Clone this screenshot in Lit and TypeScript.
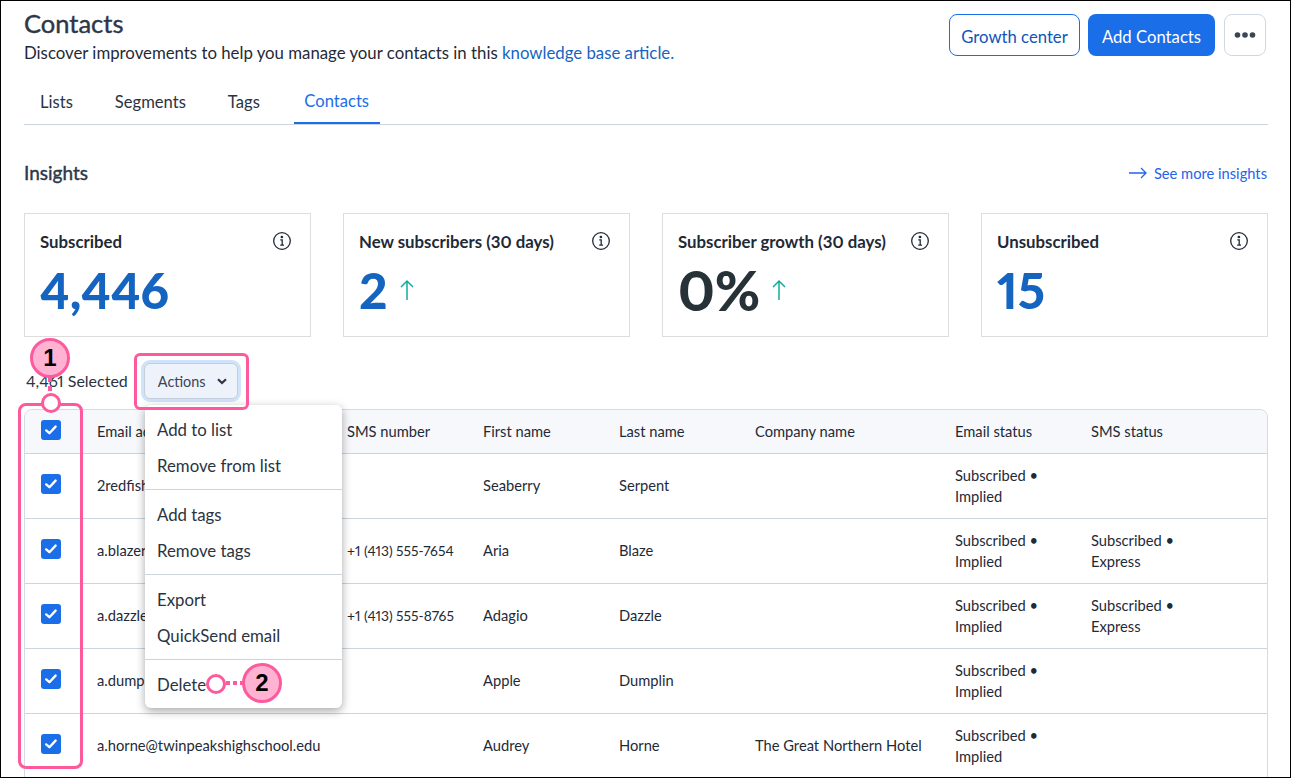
import { LitElement, html, css, svg } from 'lit';
import { customElement } from 'lit/decorators.js';

const cards = [
  { title: 'Subscribed', value: '4,446', dark: false, arrow: false },
  { title: 'New subscribers (30 days)', value: '2', dark: false, arrow: true },
  { title: 'Subscriber growth (30 days)', value: '0%', dark: true, arrow: true },
  { title: 'Unsubscribed', value: '15', dark: false, arrow: false },
];

const rows = [
  { email: '2redfish@example.com', sms: '', first: 'Seaberry', last: 'Serpent', company: '', smsStatus: false },
  { email: 'a.blazer@example.com', sms: '+1 (413) 555-7654', first: 'Aria', last: 'Blaze', company: '', smsStatus: true },
  { email: 'a.dazzle@example.com', sms: '+1 (413) 555-8765', first: 'Adagio', last: 'Dazzle', company: '', smsStatus: true },
  { email: 'a.dumplin@example.com', sms: '', first: 'Apple', last: 'Dumplin', company: '', smsStatus: false },
  { email: 'a.horne@twinpeakshighschool.edu', sms: '', first: 'Audrey', last: 'Horne', company: 'The Great Northern Hotel', smsStatus: false },
];

const menu = [['Add to list', 'Remove from list'], ['Add tags', 'Remove tags'], ['Export', 'QuickSend email'], ['Delete']];

const infoIcon = svg`<svg class="info" width="20" height="20" viewBox="0 0 20 20" fill="none" stroke="#1f2a37" stroke-width="1.3">
  <circle cx="10" cy="10" r="8.3"/><path d="M8.3 8.8H10.2V14M8.2 14.1H12"/><circle cx="9.9" cy="6" r=".7" fill="#1f2a37"/></svg>`;

const upArrow = svg`<svg class="up" width="16" height="22" viewBox="0 0 16 22" fill="none" stroke="#12ab9f" stroke-width="1.5">
  <path d="M8 21V2M2 8L8 2L14 8"/></svg>`;

const check = svg`<svg width="20" height="20" viewBox="0 0 20 20" fill="none" stroke="#fff" stroke-width="2.4" stroke-linecap="round" stroke-linejoin="round">
  <path d="M5.2 10.4L8.4 13.2L14.6 6.6"/></svg>`;

@customElement('app-root')
export class AppRoot extends LitElement {
  static styles = css`
    :host {
      display: block;
      position: relative;
      box-sizing: border-box;
      width: 1291px;
      height: 778px;
      overflow: hidden;
      border: 1px solid #000;
      background: #fff;
      padding: 0 22px 0 23px;
      font-family: Lato, "Open Sans", sans-serif;
      font-variant-numeric: proportional-nums;
      color: #2a3441;
    }

    .top {
      display: flex;
      justify-content: space-between;
      height: 86px;
    }

    h1 {
      margin: 7px 0 0;
      font-size: 25.5px;
      line-height: 30px;
      font-weight: 400;
      -webkit-text-stroke: 0.4px #2d3748;
      color: #2d3748;
    }

    .sub {
      margin: 4px 0 0;
      font-size: 16.8px;
      line-height: 22px;
      color: #1f2a37;
    }

    .sub a {
      color: #1565c0;
      text-decoration: none;
    }

    .buttons {
      display: flex;
      align-items: flex-start;
      gap: 8px;
      padding: 13px 2px 0 0;
    }

    .btn {
      box-sizing: border-box;
      display: flex;
      align-items: center;
      justify-content: center;
      height: 42px;
      border-radius: 8px;
      font-size: 16.7px;
    }

    .btn span { padding-top: 3px; }

    .outline { width: 131px; border: 1px solid #1a6ee8; color: #0f55b8; }
    .solid { width: 127px; background: #1a6ee8; color: #fff; }
    .dots { width: 42px; margin-left: 1px; border: 1px solid #cfd6e4; }

    .tabs {
      display: flex;
      gap: 10px;
      height: 38px;
      box-sizing: border-box;
      border-bottom: 1px solid #ccd5dd;
      font-size: 16.6px;
    }

    .tab {
      box-sizing: border-box;
      padding: 5px 16px 0;
      height: 37px;
      white-space: nowrap;
    }

    .tab.active {
      margin-left: 8px;
      padding: 4px 10.5px 0;
      color: #1a6ee8;
      border-bottom: 2px solid #1a6ee8;
    }

    .insights {
      display: flex;
      justify-content: space-between;
      align-items: center;
      margin-top: 37px;
      height: 22px;
    }

    h2 {
      margin: -2px 0 0;
      font-size: 19px;
      font-weight: 400;
      -webkit-text-stroke: 0.4px #2d3748;
      color: #2d3748;
    }

    .more {
      display: flex;
      align-items: center;
      gap: 7px;
      font-size: 14.7px;
      color: #2563eb;
      margin-right: 1px;
    }

    .cards {
      display: grid;
      grid-template-columns: repeat(4, 287px);
      gap: 32px;
      margin-top: 29px;
    }

    .card {
      box-sizing: border-box;
      height: 124px;
      border: 1px solid #ddd;
      padding: 17px 18px 0 15px;
    }

    .card-head {
      display: flex;
      justify-content: space-between;
      align-items: center;
      height: 20px;
      font-size: 16.8px;
      font-weight: 700;
      color: #1f2a37;
    }

    .value {
      display: flex;
      align-items: center;
      gap: 11px;
      margin-top: 8px;
      font-size: 49.5px;
      line-height: 62px;
      font-weight: 900;
      color: #1565c0;
    }

    .value.dark {
      font-size: 55px;
      color: #263238;
    }

    .select-bar {
      display: flex;
      align-items: center;
      height: 36px;
      margin-top: 26px;
      padding-left: 2px;
      font-size: 16px;
    }

    .select-bar span { margin-top: -1px; }

    .actions {
      box-sizing: border-box;
      display: flex;
      align-items: center;
      gap: 11px;
      width: 94px;
      height: 36px;
      margin-left: 16px;
      padding-left: 13px;
      background: #eef2fa;
      border: 1px solid #c5cedc;
      border-radius: 6px;
      box-shadow: 0 0 0 3px #cfe3fb;
      font-size: 14.4px;
      color: #3a4656;
    }

    .table {
      margin-top: 10px;
      border: 1px solid #d5dbe3;
      border-radius: 8px 8px 0 0;
      font-size: 14.7px;
      color: #1f2a37;
    }

    .row {
      display: grid;
      grid-template-columns: 72px 250px 136px 136px 136px 200px 136px 1fr;
      align-items: center;
      height: 65px;
      box-sizing: border-box;
      border-top: 1px solid #ccd5dd;
      line-height: 21px;
    }

    .row.head {
      height: 43px;
      border-top: 0;
      background: #f6f8fb;
      border-radius: 8px 8px 0 0;
    }

    .phone { font-size: 13.8px; }
    .single { margin-top: -2px; }

    .box {
      width: 20px;
      height: 20px;
      margin: -4px 0 0 16px;
      border-radius: 3px;
      background: #1a6ee8;
    }

    .head .box { margin-top: -3px; }

    .menu {
      position: absolute;
      left: 144px;
      top: 404px;
      width: 197px;
      height: 303px;
      box-sizing: border-box;
      background: #fff;
      border-radius: 6px;
      box-shadow: 0 3px 10px rgba(0, 0, 0, 0.35);
      padding-top: 6px;
      font-size: 16.8px;
      color: #2a3441;
    }

    .group {
      border-top: 1px solid #ccd5dd;
      padding: 6px 0;
    }

    .group:first-child { border-top: 0; padding-top: 0; }

    .item {
      height: 36px;
      line-height: 38px;
      padding-left: 12px;
    }

    .frame {
      position: absolute;
      box-sizing: border-box;
      border: 3px solid #fd5a9d;
    }

    .frame.one { left: 133px; top: 352px; width: 115px; height: 57px; border-radius: 6px; }
    .frame.two { left: 17px; top: 402px; width: 65px; height: 366px; border-radius: 8px; }

    .badge {
      position: absolute;
      box-sizing: border-box;
      width: 40px;
      height: 40px;
      border: 3px solid #fd5a9d;
      border-radius: 50%;
      background: #ffb2d2;
      color: #000;
      font: 700 24px/34px "Liberation Sans", sans-serif;
      text-align: center;
    }

    .badge.one { left: 29px; top: 337px; }
    .badge.two { left: 241px; top: 662px; }

    .dot {
      position: absolute;
      box-sizing: border-box;
      width: 20px;
      height: 20px;
      border: 3px solid #fd5a9d;
      border-radius: 50%;
      background: #fff;
    }

    .dot.one { left: 40px; top: 392px; }
    .dot.two { left: 205px; top: 673px; }

    .line { position: absolute; }
    .line.one { left: 47px; top: 376px; width: 4px; height: 17px; background: repeating-linear-gradient(#fd5a9d 0 5px, transparent 5px 9px); }
    .line.two { left: 225px; top: 680px; width: 18px; height: 4px; background: repeating-linear-gradient(90deg, #fd5a9d 0 4px, transparent 4px 7px); }
  `;

  render() {
    return html`
      <div class="top">
        <div>
          <h1>Contacts</h1>
          <p class="sub">Discover improvements to help you manage your contacts in this <a>knowledge base article.</a></p>
        </div>
        <div class="buttons">
          <div class="btn outline"><span>Growth center</span></div>
          <div class="btn solid"><span>Add Contacts</span></div>
          <div class="btn dots">
            <svg width="22" height="6" viewBox="0 0 22 6" fill="#3a4656"><circle cx="3.5" cy="3" r="2.8"/><circle cx="11" cy="3" r="2.8"/><circle cx="18.5" cy="3" r="2.8"/></svg>
          </div>
        </div>
      </div>
      <div class="tabs">
        <div class="tab">Lists</div>
        <div class="tab">Segments</div>
        <div class="tab">Tags</div>
        <div class="tab active">Contacts</div>
      </div>
      <div class="insights">
        <h2>Insights</h2>
        <div class="more">
          <svg width="18" height="12" viewBox="0 0 18 12" fill="none" stroke="#2563eb" stroke-width="1.3"><path d="M0 6H17M12 1L17 6L12 11"/></svg>
          See more insights
        </div>
      </div>
      <div class="cards">
        ${cards.map(c => html`
          <div class="card">
            <div class="card-head"><span>${c.title}</span>${infoIcon}</div>
            <div class="value ${c.dark ? 'dark' : ''}"><span>${c.value}</span>${c.arrow ? upArrow : ''}</div>
          </div>
        `)}
      </div>
      <div class="select-bar">
        <span>4,461 Selected</span>
        <div class="actions">
          Actions
          <svg width="10" height="7" viewBox="0 0 10 7" fill="none" stroke="#2d3748" stroke-width="2.2"><path d="M1 1.2L5 5L9 1.2"/></svg>
        </div>
      </div>
      <div class="table">
        <div class="row head">
          <div class="box">${check}</div>
          <div>Email address</div><div>SMS number</div><div>First name</div><div>Last name</div>
          <div>Company name</div><div>Email status</div><div>SMS status</div>
        </div>
        ${rows.map(r => html`
          <div class="row">
            <div class="box">${check}</div>
            <div class="single">${r.email}</div><div class="single phone">${r.sms}</div>
            <div class="single">${r.first}</div><div class="single">${r.last}</div><div class="single">${r.company}</div>
            <div>Subscribed •<br />Implied</div>
            <div>${r.smsStatus ? html`Subscribed •<br />Express` : ''}</div>
          </div>
        `)}
      </div>
      <div class="menu">
        ${menu.map(g => html`<div class="group">${g.map(i => html`<div class="item">${i}</div>`)}</div>`)}
      </div>
      <div class="frame one"></div>
      <div class="frame two"></div>
      <div class="line one"></div>
      <div class="line two"></div>
      <div class="dot one"></div>
      <div class="dot two"></div>
      <div class="badge one">1</div>
      <div class="badge two">2</div>
    `;
  }
}
